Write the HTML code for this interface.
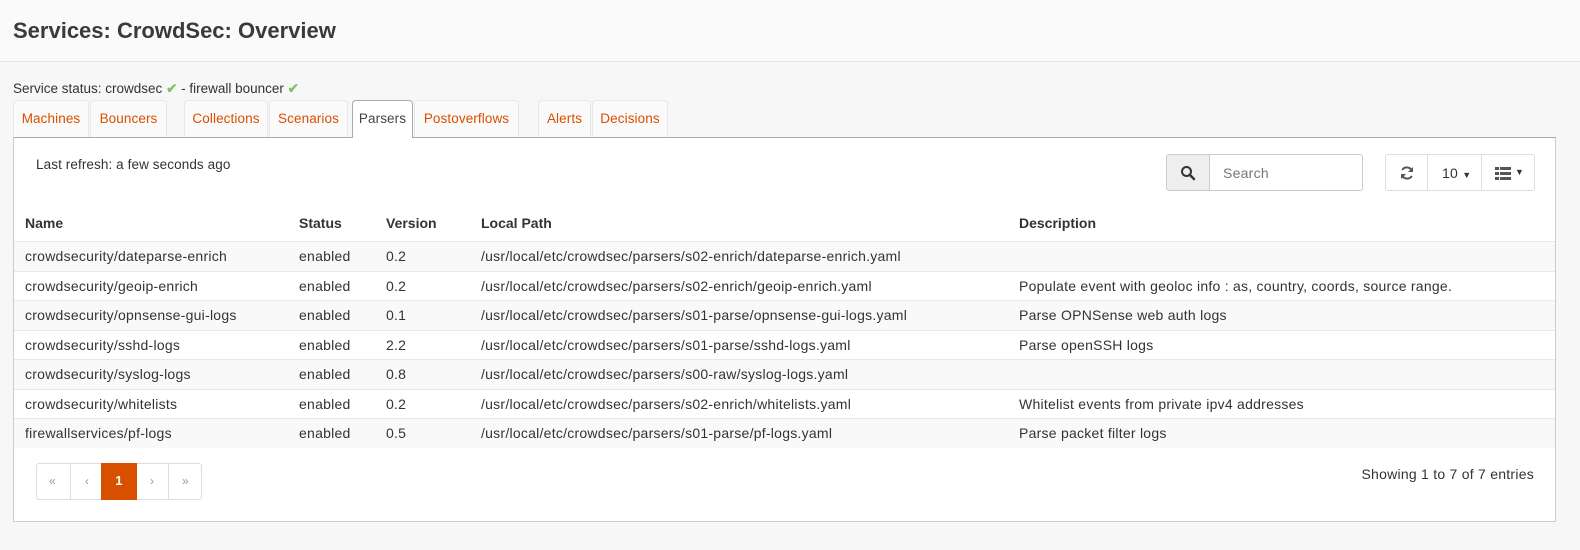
<!DOCTYPE html>
<html><head><meta charset="utf-8"><style>
*{box-sizing:border-box;margin:0;padding:0}
body{width:1580px;height:550px;background:#f7f7f7;font-family:"Liberation Sans",sans-serif;font-size:14px;letter-spacing:0.25px;color:#333;position:relative;overflow:hidden}
.hdr{position:absolute;left:0;top:0;width:1580px;height:62px;background:#fafafa;border-bottom:1px solid #e5e5e5}
.hdr h1{position:absolute;left:13px;top:18px;font-size:22px;font-weight:bold;color:#3a3a3a;letter-spacing:0px}
.status{position:absolute;left:13px;top:81px;font-size:13.5px;letter-spacing:0}
.ck{color:#7dc36b;font-weight:bold}
.tab{position:absolute;top:100px;height:37px;border:1px solid #e8e8e8;border-bottom:none;border-radius:4px 4px 0 0;background:#fafafa;color:#d94f00;padding:10px 0 0;text-align:center;font-size:13.5px;letter-spacing:0.1px}
.tab.act{background:#fff;border-color:#aaa;color:#444;height:38px;z-index:2}
.panel{position:absolute;left:13px;top:137px;width:1543px;height:385px;background:#fff;border:1px solid #ccc;border-top:1px solid #aaa}
.abs{position:absolute}
.row{position:absolute;left:0;width:1541px;height:29.5px;border-top:1px solid #e8e8e8}
.row span,.th span{position:absolute;top:6px;white-space:nowrap}
.th span{font-weight:bold;top:77px;letter-spacing:0}
.c1{left:11px}.c2{left:285px}.c3{left:372px}.c4{left:467px}.c5{left:1005px}
.btn{position:absolute;border:1px solid #ddd;height:37px;background:#fff}
</style></head><body>
<div class="hdr"><h1>Services: CrowdSec: Overview</h1></div>
<div class="status">Service status: crowdsec <span class="ck">✔</span> - firewall bouncer <span class="ck">✔</span></div>
<div class="tab" style="left:13px;width:76px">Machines</div>
<div class="tab" style="left:90px;width:77px">Bouncers</div>
<div class="tab" style="left:184px;width:84px">Collections</div>
<div class="tab" style="left:269px;width:79px">Scenarios</div>
<div class="tab act" style="left:352px;width:61px">Parsers</div>
<div class="tab" style="left:414px;width:105px">Postoverflows</div>
<div class="tab" style="left:538px;width:53px">Alerts</div>
<div class="tab" style="left:592px;width:76px">Decisions</div>
<div class="panel">
 <div class="abs" style="left:22px;top:19px;font-size:13.5px;letter-spacing:0.1px">Last refresh: a few seconds ago</div>
 <div class="btn" style="left:1152px;top:16px;width:44px;background:#eee;border-color:#ccc;border-radius:3px 0 0 3px">
  <svg width="16" height="16" viewBox="0 0 16 16" style="position:absolute;left:13px;top:10px"><circle cx="6.5" cy="6.5" r="4.5" fill="none" stroke="#333" stroke-width="2"/><path d="M10 10l4 4" stroke="#333" stroke-width="2.5" stroke-linecap="round"/></svg></div>
 <div class="btn" style="left:1195px;top:16px;width:154px;border-color:#ccc;border-radius:0 3px 3px 0;color:#777;padding:10px 0 0 13px">Search</div>
 <div class="btn" style="left:1371px;top:16px;width:43px;border-radius:3px 0 0 3px">
  <svg width="16" height="16" viewBox="0 0 16 16" style="position:absolute;left:13px;top:10px"><path d="M13 6A5.5 5.5 0 0 0 3.2 5M3 10a5.5 5.5 0 0 0 9.8 1" fill="none" stroke="#555" stroke-width="2"/><path d="M14 2v5h-5zM2 14V9h5z" fill="#555"/></svg></div>
 <div class="btn" style="left:1413px;top:16px;width:55px;padding:10px 0 0 14px">10 <span style="font-size:9px">▼</span></div>
 <div class="btn" style="left:1467px;top:16px;width:54px;border-radius:0 3px 3px 0">
  <svg width="18" height="14" viewBox="0 0 18 14" style="position:absolute;left:13px;top:12px"><g fill="#555"><rect x="0" y="0" width="4" height="3"/><rect x="5" y="0" width="11" height="3"/><rect x="0" y="5" width="4" height="3"/><rect x="5" y="5" width="11" height="3"/><rect x="0" y="10" width="4" height="3"/><rect x="5" y="10" width="11" height="3"/></g></svg><span style="position:absolute;left:33px;top:12px;font-size:9px">▼</span></div>
 <div class="th"><span class="c1">Name</span><span class="c2">Status</span><span class="c3">Version</span><span class="c4">Local Path</span><span class="c5">Description</span></div>
 <div class="row" style="top:103px;background:#f9f9f9"><span class="c1">crowdsecurity/dateparse-enrich</span><span class="c2">enabled</span><span class="c3">0.2</span><span class="c4">/usr/local/etc/crowdsec/parsers/s02-enrich/dateparse-enrich.yaml</span></div>
 <div class="row" style="top:132.5px"><span class="c1">crowdsecurity/geoip-enrich</span><span class="c2">enabled</span><span class="c3">0.2</span><span class="c4">/usr/local/etc/crowdsec/parsers/s02-enrich/geoip-enrich.yaml</span><span class="c5">Populate event with geoloc info : as, country, coords, source range.</span></div>
 <div class="row" style="top:162px;background:#f9f9f9"><span class="c1">crowdsecurity/opnsense-gui-logs</span><span class="c2">enabled</span><span class="c3">0.1</span><span class="c4">/usr/local/etc/crowdsec/parsers/s01-parse/opnsense-gui-logs.yaml</span><span class="c5">Parse OPNSense web auth logs</span></div>
 <div class="row" style="top:191.5px"><span class="c1">crowdsecurity/sshd-logs</span><span class="c2">enabled</span><span class="c3">2.2</span><span class="c4">/usr/local/etc/crowdsec/parsers/s01-parse/sshd-logs.yaml</span><span class="c5">Parse openSSH logs</span></div>
 <div class="row" style="top:221px;background:#f9f9f9"><span class="c1">crowdsecurity/syslog-logs</span><span class="c2">enabled</span><span class="c3">0.8</span><span class="c4">/usr/local/etc/crowdsec/parsers/s00-raw/syslog-logs.yaml</span></div>
 <div class="row" style="top:250.5px"><span class="c1">crowdsecurity/whitelists</span><span class="c2">enabled</span><span class="c3">0.2</span><span class="c4">/usr/local/etc/crowdsec/parsers/s02-enrich/whitelists.yaml</span><span class="c5">Whitelist events from private ipv4 addresses</span></div>
 <div class="row" style="top:280px;background:#f9f9f9"><span class="c1">firewallservices/pf-logs</span><span class="c2">enabled</span><span class="c3">0.5</span><span class="c4">/usr/local/etc/crowdsec/parsers/s01-parse/pf-logs.yaml</span><span class="c5">Parse packet filter logs</span></div>
 <div class="abs" style="left:22px;top:325px;width:166px;height:37px;border:1px solid #ddd;border-radius:3px;color:#999;font-size:12px">
  <span class="abs" style="left:12px;top:10px">«</span><span class="abs" style="left:33px;top:0;height:35px;border-left:1px solid #ddd"></span>
  <span class="abs" style="left:48px;top:10px">‹</span>
  <span class="abs" style="left:64px;top:-1px;width:36px;height:37px;background:#d94f00;color:#fff;text-align:center;padding-top:10px;font-weight:bold;font-size:13px">1</span>
  <span class="abs" style="left:113px;top:10px">›</span><span class="abs" style="left:131px;top:0;height:35px;border-left:1px solid #ddd"></span>
  <span class="abs" style="left:145px;top:10px">»</span></div>
 <div class="abs" style="right:21px;top:328px">Showing 1 to 7 of 7 entries</div>
</div>
</body></html>
